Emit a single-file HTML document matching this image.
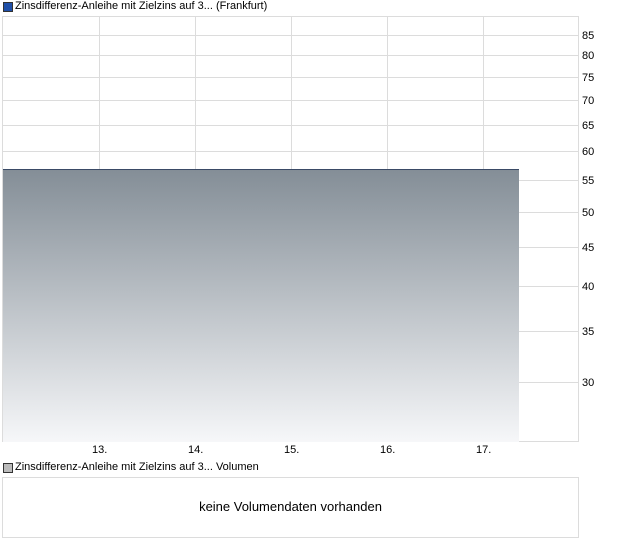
<!DOCTYPE html><html><head><style>
body{margin:0;width:620px;height:546px;background:#fff;font-family:"Liberation Sans",sans-serif;font-size:11px;color:#000;position:relative;overflow:hidden}
.a{position:absolute}
.h{position:absolute;left:3px;width:575px;height:1px;background:#dcdcdc}
.v{position:absolute;top:17px;height:424px;width:1px;background:#dcdcdc}
.yl{position:absolute;left:582px}
.xl{position:absolute;top:444px}
</style></head><body>
<div class="a" style="left:3px;top:2px;width:8px;height:8px;background:#1f4fa8;border:1px solid #333"></div>
<div class="a" style="left:15px;top:0px">Zinsdifferenz-Anleihe mit Zielzins auf 3... (Frankfurt)</div>
<div class="a" style="left:2px;top:16px;width:575px;height:424px;border:1px solid #dcdcdc"></div>
<div class="v" style="left:99px"></div><div class="v" style="left:195px"></div><div class="v" style="left:291px"></div><div class="v" style="left:387px"></div><div class="v" style="left:483px"></div>
<div class="h" style="top:35px"></div><div class="h" style="top:55px"></div><div class="h" style="top:77px"></div><div class="h" style="top:100px"></div><div class="h" style="top:125px"></div><div class="h" style="top:151px"></div><div class="h" style="top:180px"></div><div class="h" style="top:212px"></div><div class="h" style="top:247px"></div><div class="h" style="top:286px"></div><div class="h" style="top:331px"></div><div class="h" style="top:382px"></div>
<div class="a" style="left:3px;top:169px;width:516px;height:272px;background:linear-gradient(#848e97,#f6f7f9);border-top:1px solid #3a4a66"></div>
<div class="yl" style="top:30px">85</div><div class="yl" style="top:50px">80</div><div class="yl" style="top:72px">75</div><div class="yl" style="top:95px">70</div><div class="yl" style="top:120px">65</div><div class="yl" style="top:146px">60</div><div class="yl" style="top:175px">55</div><div class="yl" style="top:207px">50</div><div class="yl" style="top:242px">45</div><div class="yl" style="top:281px">40</div><div class="yl" style="top:326px">35</div><div class="yl" style="top:377px">30</div>
<div class="xl" style="left:92px">13.</div><div class="xl" style="left:188px">14.</div><div class="xl" style="left:284px">15.</div><div class="xl" style="left:380px">16.</div><div class="xl" style="left:476px">17.</div>
<div class="a" style="left:3px;top:463px;width:8px;height:8px;background:#bbb;border:1px solid #333"></div>
<div class="a" style="left:15px;top:461px">Zinsdifferenz-Anleihe mit Zielzins auf 3... Volumen</div>
<div class="a" style="left:2px;top:477px;width:575px;height:59px;border:1px solid #dcdcdc"></div>
<div class="a" style="left:2px;top:499px;width:577px;text-align:center;font-size:13px">keine Volumendaten vorhanden</div>
</body></html>
